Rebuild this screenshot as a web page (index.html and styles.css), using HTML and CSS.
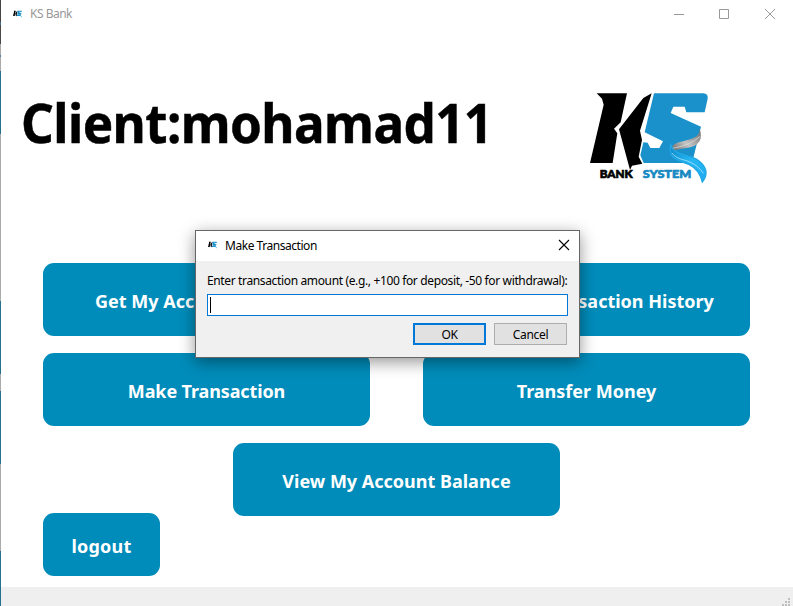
FILE: index.html
```html
<!DOCTYPE html>
<html lang="en">
<head>
<meta charset="utf-8">
<title>KS Bank</title>
<link rel="stylesheet" href="styles.css">
</head>
<body>
<svg class="defs" aria-hidden="true">
  <defs>
    <linearGradient id="silver" x1="0" y1="1" x2="1" y2="0"><stop offset="0" stop-color="#555"/><stop offset=".45" stop-color="#c4c4c4"/><stop offset="1" stop-color="#666"/></linearGradient>
    <linearGradient id="aqua" x1="0" y1="0" x2="1" y2="1"><stop offset="0" stop-color="#0c84c4"/><stop offset=".5" stop-color="#25b8f5"/><stop offset="1" stop-color="#20aaf0"/></linearGradient>
    <symbol id="ks" viewBox="28 36 360 274">
      <path d="M50 40H141L122 127L102 146L112 160L98 249H30L71 74L66 56Z" fill="#000"/>
      <path d="M215 40L190 54L117 148L150 270L156 257L187 251L176 230L186 180L180 152Z" fill="#000"/>
      <path d="M222 40H370Q385 41 383 56L374 97H319L314 80H280L272 99L363 140L340 234Q336 249 322 249H191L181 226L190 187L203 188L211 204H238L249 184L194 157Z" fill="#1b91cb"/>
      <path d="M358 144C364 174 330 178 292 188Q268 196 275 220Q287 207 317 205C358 199 371 178 358 144Z" fill="url(#silver)"/>
      <path d="M278 205Q330 196 361 169" fill="none" stroke="#e6e6e6" stroke-width="2"/>
      <path d="M272 195C264 243 302 241 328 254Q358 269 367 306C386 284 381 258 350 238C320 221 284 228 272 195Z" fill="url(#aqua)" stroke="#20a8e5" stroke-width="4"/>
      <path d="M276 219Q286 235 320 242Q356 256 370 280" fill="none" stroke="#c5edff" stroke-width="2"/>
    </symbol>
  </defs>
</svg>
<div class="desktop-edge"></div>
<main class="window">
  <header class="titlebar">
    <svg class="app-icon"><use href="#ks"/></svg>
    <span class="app-name">KS Bank</span>
    <svg class="controls" viewBox="0 0 103 12" fill="none" stroke="#999"><path d="M1 6.5H11M46.500 1.500H55.500V10.500H46.500ZM92 1L102 11M102 1L92 11"/></svg>
  </header>
  <section class="hero">
    <h1>Client:mohamad11</h1>
    <svg class="logo" viewBox="0 0 420 330">
      <use href="#ks" x="28" y="36" width="360" height="274"/>
      <g class="logo-text"><text x="59" y="293" textLength="99" lengthAdjust="spacingAndGlyphs">BANK</text><text class="system" x="188" y="293" textLength="146" lengthAdjust="spacingAndGlyphs">SYSTEM</text></g>
    </svg>
  </section>
  <section class="actions">
    <button><span class="wide">Get My Account Details</span></button>
    <button>View My Transaction History</button>
    <button class="make">Make Transaction</button>
    <button>Transfer Money</button>
    <button class="balance">View My Account Balance</button>
  </section>
  <button class="logout">logout</button>
  <footer class="statusbar">
    <svg class="grip" viewBox="0 0 8 8" fill="#bfbfbf"><path d="M6 0h2v2h-2zM3 3h2v2h-2zM6 3h2v2h-2zM0 6h2v2h-2zM3 6h2v2h-2zM6 6h2v2h-2z"/></svg>
  </footer>
</main>
<div class="dialog" role="dialog">
  <div class="dialog-title">
    <svg class="app-icon"><use href="#ks"/></svg>
    <span>Make Transaction</span>
    <svg class="close" viewBox="0 0 12 12" stroke="#000" stroke-width="1.100"><path d="M1 1L11 11M11 1L1 11"/></svg>
  </div>
  <div class="dialog-body">
    <label>Enter transaction amount (e.g., +100 for deposit, -50 for withdrawal):</label>
    <div class="field"><i class="caret"></i></div>
    <div class="dialog-buttons"><button class="ok">OK</button><button>Cancel</button></div>
  </div>
</div>
</body>
</html>
```
FILE: styles.css
```css
* { box-sizing: border-box; }
body { margin: 0; width: 793px; height: 606px; overflow: hidden; display: flex; background: #fff; font-family: "Noto Sans", "Open Sans", sans-serif; }
button { border: 0; padding: 0; font-family: inherit; }
.defs { position: absolute; width: 0; height: 0; }
.desktop-edge { width: 1px; height: 606px; background: linear-gradient(#444 0 22px, #456f91 22px 25px, #4b4744 25px 44px, #aaa 44px 55px, #587f9c 55px 57px, #aaa 57px 71px, #23718d 71px 134px, #a9acab 134px 301px, #23718d 301px 374px, #aaa 374px 391px, #23718d 391px 464px, #a9acab 464px 551px, #23718d 551px); }
.window { width: 792px; height: 606px; display: flex; flex-direction: column; }
.titlebar { height: 28px; display: flex; align-items: center; padding: 0 17px 1px 12px; }
.app-icon { width: 9px; height: 8px; }
.app-name { margin-left: 8px; font-size: 12px; letter-spacing: -.5px; color: #999; }
.controls { width: 103px; height: 12px; margin-left: auto; }
.hero { height: 235px; display: flex; justify-content: space-between; padding: 52px 73px 0 20px; }
h1 { margin: 7px 0 0; font-size: 53px; line-height: 72px; font-weight: 700; white-space: nowrap; letter-spacing: -.6px; transform: scaleX(.965); transform-origin: 1px 0; -webkit-text-stroke: .5px #000; }
.logo { width: 140px; height: 110px; }
.logo-text { font-family: Lato, sans-serif; font-size: 34px; font-weight: 900; stroke: #000; stroke-width: 2px; }
.logo-text .system { fill: #1688c2; stroke: #1688c2; }
.actions { display: grid; grid-template-columns: 327px 327px; gap: 17px 53px; padding-left: 42px; }
.actions button, .logout { height: 73px; border-radius: 11px; background: #008cba; color: #fff; font-size: 18px; font-weight: 700; white-space: nowrap; padding-top: 3px; }
.actions .make { letter-spacing: -.12px; }
.actions .wide { display: inline-block; width: 223px; text-align: left; }
.actions .balance { grid-column: 1 / 3; justify-self: center; width: 327px; }
.logout { width: 117px; height: 63px; margin: -3px 0 0 42px; flex: none; letter-spacing: .2px; }
.statusbar { height: 19px; margin-top: auto; background: #efefef; display: flex; justify-content: flex-end; align-items: flex-end; padding: 0 3px 0 0; }
.grip { width: 8px; height: 8px; }
.dialog { position: absolute; left: 195px; top: 230px; width: 385px; height: 128px; border: 1px solid #666; background: #f0f0f0; box-shadow: 0 4px 15px rgba(0, 0, 0, .42); font-size: 12px; color: #000; }
.dialog-title { height: 30px; display: flex; align-items: center; background: #fff; padding: 0 9px 2px 12px; letter-spacing: -.46px; }
.dialog-title span { margin-left: 8px; }
.close { width: 12px; height: 12px; margin-left: auto; }
.dialog-body { padding: 12px 11px; }
label { display: block; height: 21px; line-height: 15px; white-space: nowrap; letter-spacing: -.36px; }
.field { width: 361px; height: 22px; border: 1px solid #0078d7; background: #fff; padding: 2px; }
.caret { display: block; width: 1px; height: 16px; background: #000; }
.dialog-buttons { display: flex; justify-content: flex-end; gap: 8px; margin: 7px 1px 0 0; }
.dialog-buttons button { width: 73px; height: 22px; background: #e1e1e1; border: 1px solid #adadad; font-size: 12px; letter-spacing: -.3px; color: #000; }
.dialog-buttons .ok { border: 2px solid #0078d7; }
```
